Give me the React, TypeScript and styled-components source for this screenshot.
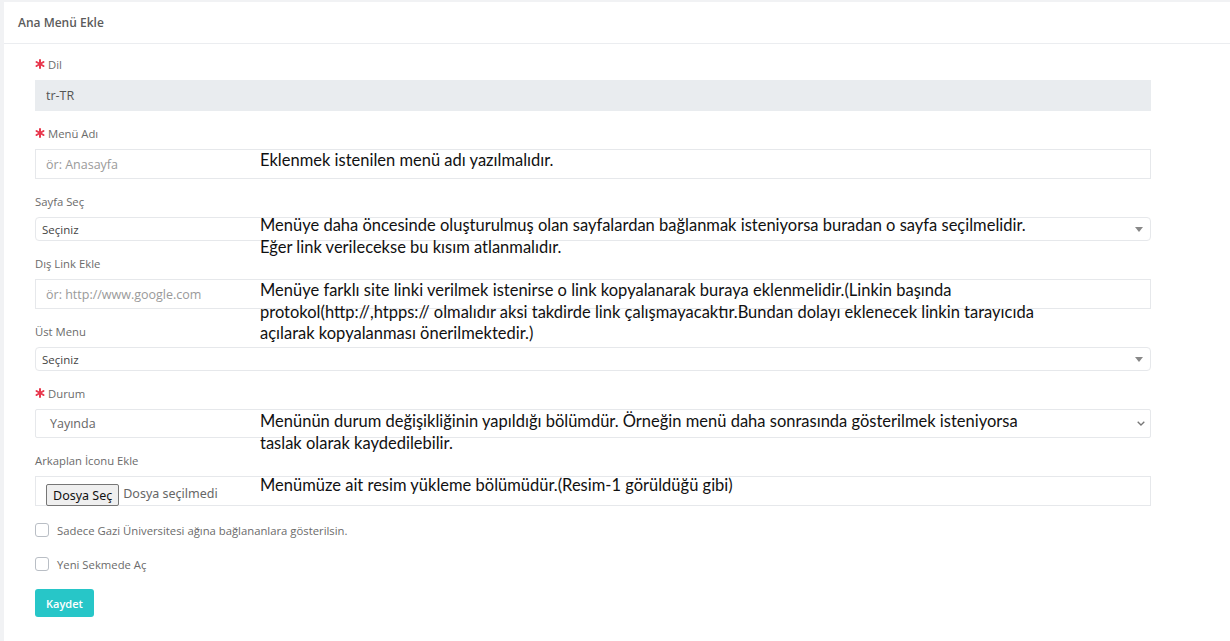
import React from "react";
import styled, { createGlobalStyle } from "styled-components";

const GlobalStyle = createGlobalStyle`
	html, body {
		margin: 0;
		padding: 0;
		background: #f1f2f4;
		font-family: "Open Sans", "Noto Sans", sans-serif;
	}
	* {
		box-sizing: border-box;
	}
`;

const Page = styled.div`
	padding: 2px 0 0 4px;
	min-height: 641px;
`;

const Card = styled.div`
	background: #ffffff;
	min-height: 639px;
`;

const CardHeader = styled.div`
	height: 42px;
	display: flex;
	align-items: center;
	padding: 0 14px;
	border-bottom: 1px solid #ebedf0;
	font-size: 12px;
	font-weight: 600;
	color: #5b5b5b;
`;

const CardBody = styled.div`
	position: relative;
	padding: 12px 79px 20px 31px;
`;

const FormGroup = styled.div`
	margin-bottom: 14px;
`;

const Label = styled.div`
	display: flex;
	align-items: center;
	gap: 3px;
	height: 16px;
	margin-bottom: 8px;
	font-size: 11.3px;
	color: #6b6b6b;
`;

const Asterisk = styled.svg`
	width: 10px;
	height: 10px;
	margin-top: -1px;
`;

const TextInput = styled.input<{ $readOnly?: boolean; $tall?: boolean }>`
	display: block;
	width: 100%;
	height: ${(p) => (p.$tall ? "31px" : "30px")};
	padding: 0 10px;
	border: 1px solid ${(p) => (p.$readOnly ? "#e9ecef" : "#e6e8eb")};
	border-radius: 0;
	background: ${(p) => (p.$readOnly ? "#e9ecef" : "#ffffff")};
	font-family: inherit;
	font-size: 12.5px;
	color: #555;
	outline: none;

	&::placeholder {
		color: #9a9a9a;
	}
`;

const SelectBox = styled.div<{ $native?: boolean }>`
	display: flex;
	align-items: center;
	justify-content: space-between;
	width: 100%;
	height: ${(p) => (p.$native ? "29px" : "24px")};
	padding: ${(p) => (p.$native ? "0 5px 0 14px" : "0 7px 0 6px")};
	border: 1px solid #e6e8eb;
	border-radius: ${(p) => (p.$native ? "2px" : "4px")};
	font-size: ${(p) => (p.$native ? "12.5px" : "11.5px")};
	color: ${(p) => (p.$native ? "#666" : "#444")};
`;

const Caret = styled.span`
	width: 0;
	height: 0;
	border-left: 4px solid transparent;
	border-right: 4px solid transparent;
	border-top: 5px solid #888;
`;

const FileBox = styled.div`
	display: flex;
	align-items: flex-end;
	gap: 4px;
	height: 30px;
	padding: 0 10px;
	border: 1px solid #e6e8eb;
	font-family: "Noto Sans", "Open Sans", sans-serif;
	font-size: 12.5px;
	color: #666;
`;

const FileButton = styled.span`
	display: inline-flex;
	align-items: center;
	height: 22px;
	padding: 0 6px;
	margin-bottom: -1px;
	background: #efefef;
	border: 1px solid #767676;
	border-radius: 2px;
	color: #111;
`;

const FileName = styled.span`
	line-height: 22px;
`;

const CheckRow = styled.label`
	display: flex;
	align-items: center;
	gap: 8px;
	height: 20px;
	margin-bottom: 14px;
	font-size: 11.3px;
	color: #6b6b6b;
`;

const CheckBox = styled.span`
	width: 14px;
	height: 14px;
	border: 1px solid #b9bec5;
	border-radius: 3px;
	background: #fff;
`;

const SubmitButton = styled.button`
	margin-top: 1px;
	height: 28px;
	padding: 0 11px;
	border: none;
	border-radius: 3px;
	background: #27c6c8;
	color: #fff;
	font-family: inherit;
	font-size: 11px;
	font-weight: 600;
`;

const Note = styled.div<{ $top: number }>`
	position: absolute;
	left: 256px;
	top: ${(p) => p.$top}px;
	font-family: "Lato", "Noto Sans", sans-serif;
	font-size: 16.5px;
	line-height: 21.5px;
	color: #111;
	white-space: nowrap;
	pointer-events: none;
`;

const RequiredMark = () => (
	<Asterisk viewBox="0 0 10 10">
		<g stroke="#e8394e" strokeWidth="2" strokeLinecap="round">
			<line x1="5" y1="1" x2="5" y2="9" />
			<line x1="1.5" y1="3" x2="8.5" y2="7" />
			<line x1="1.5" y1="7" x2="8.5" y2="3" />
		</g>
	</Asterisk>
);

const Chevron = () => (
	<svg width="8" height="5" viewBox="0 0 8 5">
		<path d="M0.7 0.7l3.3 3.3 3.3-3.3" fill="none" stroke="#777" strokeWidth="1.3" />
	</svg>
);

export default function App() {
	return (
		<Page>
			<GlobalStyle />
			<Card>
				<CardHeader>Ana Menü Ekle</CardHeader>
				<CardBody>
					<FormGroup>
						<Label>
							<RequiredMark />
							Dil
						</Label>
						<TextInput $readOnly $tall readOnly defaultValue="tr-TR" />
					</FormGroup>
					<FormGroup>
						<Label>
							<RequiredMark />
							Menü Adı
						</Label>
						<TextInput placeholder="ör: Anasayfa" />
					</FormGroup>
					<FormGroup>
						<Label>Sayfa Seç</Label>
						<SelectBox>
							Seçiniz
							<Caret />
						</SelectBox>
					</FormGroup>
					<FormGroup>
						<Label>Dış Link Ekle</Label>
						<TextInput placeholder="ör: http://www.google.com" />
					</FormGroup>
					<FormGroup>
						<Label>Üst Menu</Label>
						<SelectBox>
							Seçiniz
							<Caret />
						</SelectBox>
					</FormGroup>
					<FormGroup>
						<Label>
							<RequiredMark />
							Durum
						</Label>
						<SelectBox $native>
							Yayında
							<Chevron />
						</SelectBox>
					</FormGroup>
					<FormGroup>
						<Label>Arkaplan İconu Ekle</Label>
						<FileBox>
							<FileButton>Dosya Seç</FileButton>
							<FileName>Dosya seçilmedi</FileName>
						</FileBox>
					</FormGroup>
					<CheckRow>
						<CheckBox />
						Sadece Gazi Üniversitesi ağına bağlananlara gösterilsin.
					</CheckRow>
					<CheckRow>
						<CheckBox />
						Yeni Sekmede Aç
					</CheckRow>
					<SubmitButton>Kaydet</SubmitButton>

					<Note $top={106}>Eklenmek istenilen menü adı yazılmalıdır.</Note>
					<Note $top={171}>
						Menüye daha öncesinde oluşturulmuş olan sayfalardan bağlanmak isteniyorsa buradan o sayfa seçilmelidir.
						<br />
						Eğer link verilecekse bu kısım atlanmalıdır.
					</Note>
					<Note $top={236}>
						Menüye farklı site linki verilmek istenirse o link kopyalanarak buraya eklenmelidir.(Linkin başında
						<br />
						protokol(http://,htpps:// olmalıdır aksi takdirde link çalışmayacaktır.Bundan dolayı eklenecek linkin tarayıcıda
						<br />
						açılarak kopyalanması önerilmektedir.)
					</Note>
					<Note $top={367}>
						Menünün durum değişikliğinin yapıldığı bölümdür. Örneğin menü daha sonrasında gösterilmek isteniyorsa
						<br />
						taslak olarak kaydedilebilir.
					</Note>
					<Note $top={431}>Menümüze ait resim yükleme bölümüdür.(Resim-1 görüldüğü gibi)</Note>
				</CardBody>
			</Card>
		</Page>
	);
}
